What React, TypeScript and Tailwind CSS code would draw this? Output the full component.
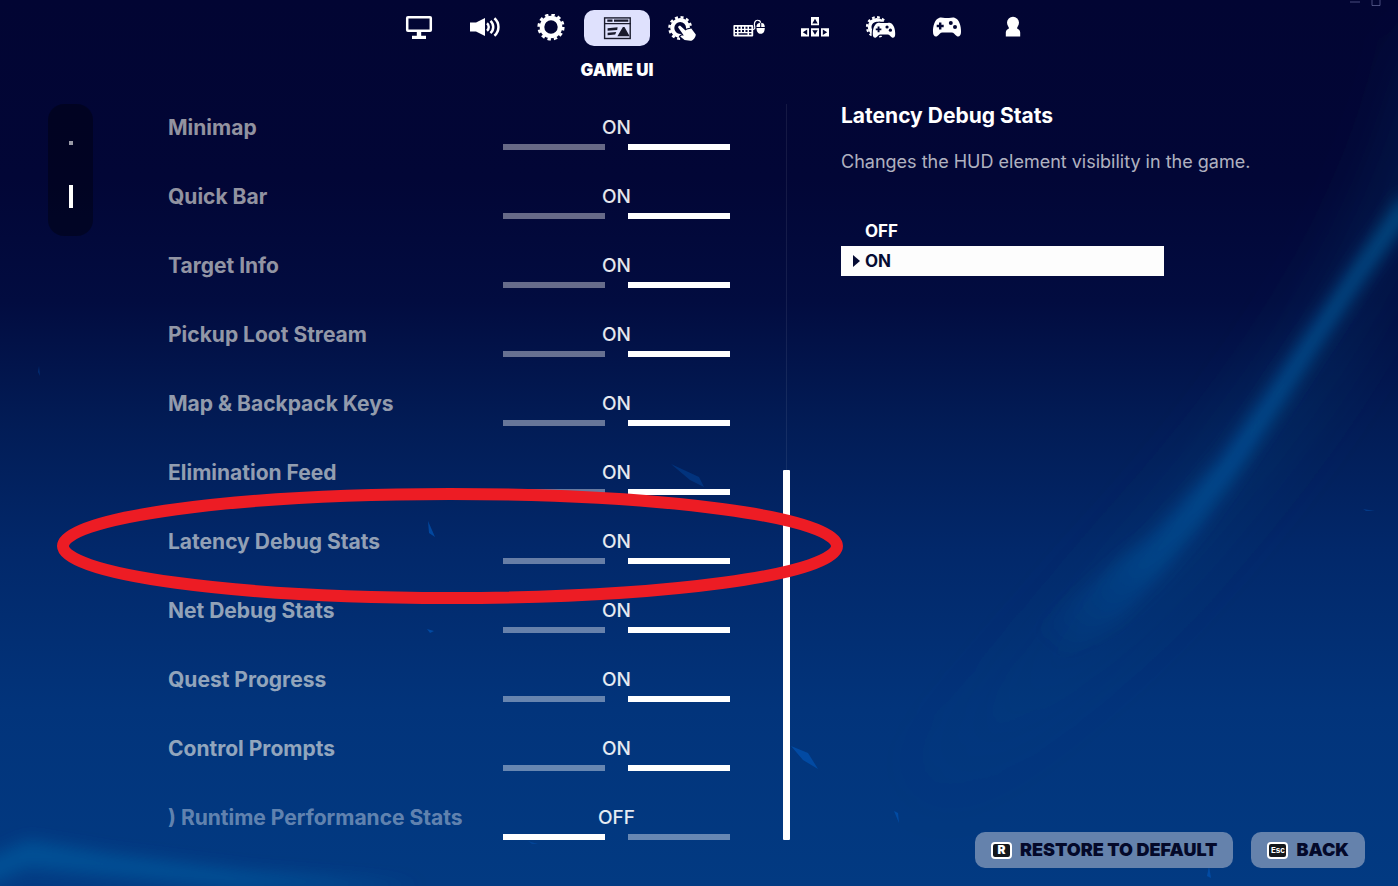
import { useState, type ReactNode } from "react";
import clsx from "clsx";

type Setting = { id: string; label: string; on: boolean; dim?: boolean };

const SETTINGS: Setting[] = [
  { id: "minimap", label: "Minimap", on: true },
  { id: "quick-bar", label: "Quick Bar", on: true },
  { id: "target-info", label: "Target Info", on: true },
  { id: "pickup-loot", label: "Pickup Loot Stream", on: true },
  { id: "map-keys", label: "Map & Backpack Keys", on: true },
  { id: "elimination-feed", label: "Elimination Feed", on: true },
  { id: "latency", label: "Latency Debug Stats", on: true },
  { id: "net-debug", label: "Net Debug Stats", on: true },
  { id: "quest-progress", label: "Quest Progress", on: true },
  { id: "control-prompts", label: "Control Prompts", on: true },
  { id: "runtime-stats", label: ") Runtime Performance Stats", on: false, dim: true },
];

const NAVY = "#020633";
const PAD =
  "M8 4C10 3 12 4 14 4H18C20 4 22 3 24 4C28 5 30.3 12 30 18C30 21.5 28 23.2 26 22.2C23.5 20.5 23 18.5 20.5 18.5H11.5C9 18.5 8.5 20.5 6 22.2C4 23.2 2 21.5 2 18C1.7 12 4 5 8 4Z";

function Icon({ children }: { children: ReactNode }) {
  return (
    <svg viewBox="0 0 32 28" className="h-7 w-8" fill="currentColor" aria-hidden="true">
      {children}
    </svg>
  );
}

function Gear({ cx, cy, scale = 1 }: { cx: number; cy: number; scale?: number }) {
  return (
    <g transform={`translate(${cx} ${cy}) scale(${scale})`} fill="none" stroke="currentColor">
      <circle r="9" strokeWidth="4.6" />
      <circle r="12.2" strokeWidth="2.8" strokeDasharray="3.4 2.988" />
    </g>
  );
}

function Gamepad({ outline }: { outline?: boolean }) {
  return (
    <>
      <path d={PAD} stroke={outline ? NAVY : "none"} strokeWidth="3" paintOrder="stroke" />
      <path d="M8 8.5h2.4v2.3h2.3v2.4h-2.3v2.3H8v-2.3H5.7v-2.4H8z" fill={NAVY} />
      <circle cx="19.8" cy="9" r="2" fill={NAVY} />
      <circle cx="24" cy="13" r="2" fill={NAVY} />
    </>
  );
}

const TABS = [
  {
    name: "VIDEO",
    icon: (
      <Icon>
        <rect x="4.2" y="3.2" width="23.6" height="13.6" rx="0.8" fill="none" stroke="currentColor" strokeWidth="2.5" />
        <path d="M13.8 17h4.4v4.7H23V25H9v-3.3h4.8z" />
      </Icon>
    ),
  },
  {
    name: "AUDIO",
    icon: (
      <Icon>
        <path d="M1 8.5h6L16 4v18l-9-4.5H1z" />
        <g fill="none" stroke="currentColor" strokeWidth="2.5">
          <path d="M18 9.3a4.8 4.8 0 0 1 0 7.4" />
          <path d="M21.5 6.800a8.400 8.400 0 0 1 0 12.400" />
          <path d="M25.400 4.200a11.600 11.600 0 0 1 0 17.600" />
        </g>
      </Icon>
    ),
  },
  { name: "GAME", icon: <Icon><Gear cx={16} cy={13} /></Icon> },
  {
    name: "GAME UI",
    icon: (
      <Icon>
        <rect x="3.6" y="3.9" width="25.6" height="20.6" fill="none" stroke="currentColor" strokeWidth="1.4" />
        <path d="M3 9h27v1.3H3zM6.3 5.6h5.2v2.2H6.3zM13 5.6h14.3v2.2H13z" />
        <path d="M6.6 14.2l10-.9-.4 2.6-9.6.9zM6.6 18.8l8.6-.8-1 2.6-7.6.6zM21.9 12.9h1.6l5.2 9.4H16.4z" />
      </Icon>
    ),
  },
  {
    name: "TOUCH AND MOTION",
    icon: (
      <Icon>
        <Gear cx={13.2} cy={14} scale={0.88} />
        <path
          d="M11.2 13.4C11 12 12.8 11.2 13.8 12.2L18.5 16.5L20 15.6L24.3 14.6L28.8 20.4C28.6 23.6 26.2 26.4 23.4 26.8L17.6 26L13.2 22.6C13.8 21.4 15.4 21.2 16.8 21.6Z"
          stroke={NAVY}
          strokeWidth="2.4"
          paintOrder="stroke"
        />
      </Icon>
    ),
  },
  {
    name: "MOUSE AND KEYBOARD",
    icon: (
      <Icon>
        <rect x="0.4" y="11" width="19.8" height="11.4" rx="1" />
        <path
          fill={NAVY}
          d="M2 12.7h2v2H2zM5.5 12.7h2v2h-2zM9 12.7h2v2H9zM12.5 12.7h2v2h-2zM16 12.7h2.4v2H16zM2 16h2v2H2zM5.5 16h2v2h-2zM9 16h2v2H9zM12.5 16h2v2h-2zM16 16h2.4v2H16zM2 19.2h2v1.6H2zM5.5 19.2h9v1.6h-9zM16 19.2h2.4v1.6H16z"
        />
        <path d="M20 15.5c3-.2 1.4-3 1.4-5.2 0-3.4 2-4.2 3.8-4 1.4.1 2.2.7 2.3 2.4" fill="none" stroke="currentColor" strokeWidth="1.2" />
        <path d="M27.2 8.7c-2.6.2-3.7 1.8-3.7 4.3h3.7zM28.2 8.7c2.4.2 3.6 1.8 3.6 4.3h-3.6zM23.5 13.9h8.3c0 3.7-1.6 5.9-4.1 5.9s-4.2-2.2-4.2-5.9z" />
      </Icon>
    ),
  },
  {
    name: "KEYBOARD CONTROLS",
    icon: (
      <Icon>
        <path d="M12 3h8v8.2h-8zM2 14.2h8v8.2H2zM12 14.2h8v8.2h-8zM22 14.2h8v8.2h-8z" />
        <path fill={NAVY} d="M16 4.8l2.7 4.6h-5.4zM3.8 18.3l4.4-2.7v5.4zM16 20.8l-2.7-4.6h5.4zM28.2 18.3l-4.4-2.7v5.4z" />
      </Icon>
    ),
  },
  {
    name: "CONTROLLER OPTIONS",
    icon: (
      <Icon>
        <Gear cx={11.8} cy={13} scale={0.8} />
        <g transform="translate(6.2 5.8) scale(0.8)">
          <Gamepad outline />
        </g>
      </Icon>
    ),
  },
  { name: "CONTROLLER", icon: <Icon><Gamepad /></Icon> },
  {
    name: "ACCOUNT",
    icon: (
      <Icon>
        <circle cx="16" cy="8.8" r="6" />
        <path d="M11.5 12h9l-.4 2.4c1.8.8 3.1 2 3.1 4v4.2H8.8v-4.2c0-2 1.3-3.2 3.1-4z" />
      </Icon>
    ),
  },
];

function Backdrop() {
  return (
    <svg
      viewBox="0 0 1398 886"
      preserveAspectRatio="none"
      className="pointer-events-none absolute inset-0 h-full w-full"
      aria-hidden="true"
    >
      <defs>
        <linearGradient id="beam" gradientUnits="userSpaceOnUse" x1="1398" y1="200" x2="1030" y2="670">
          <stop offset="0" stopColor="#04508a" stopOpacity="0.9" />
          <stop offset="0.5" stopColor="#02529a" stopOpacity="0.75" />
          <stop offset="0.75" stopColor="#02529a" stopOpacity="0.5" />
          <stop offset="0.95" stopColor="#02529a" stopOpacity="0" />
        </linearGradient>
        <linearGradient id="glow" gradientUnits="userSpaceOnUse" x1="1398" y1="200" x2="900" y2="800">
          <stop offset="0" stopColor="#045488" stopOpacity="0.2" />
          <stop offset="0.6" stopColor="#045488" stopOpacity="0.2" />
          <stop offset="1" stopColor="#045488" stopOpacity="0" />
        </linearGradient>
        <filter id="soft" x="-30%" y="-30%" width="160%" height="160%">
          <feGaussianBlur stdDeviation="8" />
        </filter>
        <filter id="wide" x="-50%" y="-50%" width="200%" height="200%">
          <feGaussianBlur stdDeviation="30" />
        </filter>
      </defs>
      <path d="M1450 40C1400 280 1240 480 1060 660S840 830 760 880" fill="none" stroke="url(#glow)" strokeWidth="70" filter="url(#wide)" />
      <path
        d="M1405 191L1357 260L1300 343L1259 404L1222 457L1186 498L1151 536L1120 560L1020 645L1034 680L1118 619L1165 569L1200 526L1238 472L1276 414L1316 352L1364 280L1410 216Z"
        fill="url(#beam)"
        filter="url(#soft)"
      />
      <path d="M-20 862L28 840L110 854L250 872L420 886L240 888L28 868L-20 888Z" fill="#0262a6" fillOpacity="0.55" filter="url(#soft)" />
      <g fill="#0350ac" fillOpacity="0.8">
        <path d="M791 746L808 753L818 769L803 760Z" />
        <path d="M894 811L898 813L899 823Z" />
        <path d="M428 521L435 537L429 533Z" />
        <path d="M427 629L434 631L430 633Z" />
        <path d="M671 464L699 477L704 487L690 480Z" fillOpacity="0.4" />
        <path d="M1209 866L1211 878L1207 876Z" />
        <path d="M1363 509L1375 511L1366 511Z" fillOpacity="0.5" />
        <path d="M528 841L538 844L532 844Z" fillOpacity="0.5" />
        <path d="M39 366L40 376L38 372Z" fillOpacity="0.4" />
      </g>
    </svg>
  );
}

function SettingRow({ setting, onToggle }: { setting: Setting; onToggle: () => void }) {
  const { id, label, on, dim } = setting;
  return (
    <li className="relative flex h-[69px] items-start pt-2.5">
      <span
        id={id}
        className={clsx("flex-1 text-[21px] leading-7 font-bold", dim ? "text-white/40" : "text-[#f6f4ea]/60")}
      >
        {label}
      </span>
      <button type="button" role="switch" aria-checked={on} aria-labelledby={id} onClick={onToggle} className="w-[227px]">
        <span className="block text-[19px] leading-7 font-medium text-white/90">{on ? "ON" : "OFF"}</span>
        <span className="mt-0.5 flex justify-between">
          <span className={clsx("h-1.5 w-[102px]", on ? "bg-white/40" : "bg-white")} />
          <span className={clsx("h-1.5 w-[102px]", on ? "bg-white" : "bg-white/40")} />
        </span>
      </button>
      {id === "latency" && (
        <svg
          viewBox="0 0 788 118"
          preserveAspectRatio="none"
          className="pointer-events-none absolute -top-[31px] -left-28 z-10 h-[118px] w-[calc(100%+226px)]"
          aria-hidden="true"
        >
          <ellipse cx="394" cy="59" rx="387" ry="52" fill="none" stroke="#ed1c24" strokeWidth="12" />
        </svg>
      )}
    </li>
  );
}

function KeyButton({ hint, children }: { hint: string; children: ReactNode }) {
  return (
    <button
      type="button"
      className="flex h-9 items-center gap-2 rounded-[10px] bg-[#6582ac] px-4 text-lg leading-6 font-black whitespace-nowrap text-[#04092a]"
    >
      <kbd
        className={clsx(
          "flex h-[17px] w-[21px] items-center justify-center rounded border-2 border-white bg-[#15181c] font-[Inter,sans-serif] text-white",
          hint.length > 1 ? "text-[8px] font-bold" : "text-xs font-black"
        )}
      >
        {hint}
      </kbd>
      {children}
    </button>
  );
}

export default function App() {
  const [settings, setSettings] = useState(SETTINGS);
  const [tab, setTab] = useState("GAME UI");
  const latencyOn = settings.some((s) => s.id === "latency" && s.on);

  const update = (id: string, on: boolean) =>
    setSettings((list) => list.map((s) => (s.id === id ? { ...s, on } : s)));

  return (
    <div className="relative flex min-h-screen flex-col overflow-hidden bg-linear-[to_bottom,#020533_0%,#020636_20%,#020c40_34%,#021c56_48%,#02286a_62%,#02347b_80%,#023a82_100%] font-[Inter,sans-serif] text-white">
      <Backdrop />
      <svg viewBox="0 0 31 7" className="absolute top-0 right-[17px] h-[7px] w-[31px]" aria-hidden="true">
        <path d="M0 2H10M22 0V5.5H30V0" fill="none" stroke="#8f96c8" strokeOpacity="0.5" />
      </svg>

      {/* Category tabs */}
      <header className="relative flex h-[104px] justify-center pt-2.5 pl-[34px]">
        {TABS.map(({ name, icon }) => (
          <div key={name} className="flex w-[66px] flex-col items-center">
            <button
              type="button"
              aria-label={name}
              onClick={() => setTab(name)}
              className={clsx(
                "flex h-9 w-full items-center justify-center rounded-[10px]",
                tab === name ? "bg-[#dfe1fd] text-[#1a1b2c]" : "text-white"
              )}
            >
              {icon}
            </button>
            {tab === name && <h1 className="mt-3 text-[17px] leading-6 font-black whitespace-nowrap">{name}</h1>}
          </div>
        ))}
      </header>

      <main className="relative flex flex-1 pr-[33px] pb-[18px] pl-12">
        <nav className="flex w-[45px] flex-col items-center gap-10 self-start rounded-2xl bg-black/35 pt-[37px] pb-7">
          <a href="#general" aria-label="General" className="size-1 bg-white/60" />
          <a href="#hud" aria-label="HUD" className="h-[23px] w-1 bg-white" />
        </nav>

        <ul className="ml-[75px] flex-[562]">
          {settings.map((s) => (
            <SettingRow key={s.id} setting={s} onToggle={() => update(s.id, !s.on)} />
          ))}
        </ul>

        {/* Scroll position */}
        <div className="mb-7 ml-[53px] flex w-[7px] flex-col items-center">
          <div className="w-px flex-[366] bg-white/8" />
          <div className="w-full flex-[370] rounded-[1px] bg-white" />
        </div>

        {/* Details for the highlighted setting */}
        <section className="ml-[51px] flex flex-[524] flex-col">
          <h2 className="text-[21px] leading-6 font-bold">Latency Debug Stats</h2>
          <p className="mt-[21px] text-lg leading-[26px] text-white/70">Changes the HUD element visibility in the game.</p>
          <div className="mt-[41px] flex w-[323px] flex-col">
            {[false, true].map((value) => (
              <button
                key={String(value)}
                type="button"
                aria-pressed={latencyOn === value}
                onClick={() => update("latency", value)}
                className={clsx(
                  "flex h-[30px] items-center pl-3 text-left text-[17px] leading-7 font-bold",
                  latencyOn === value ? "bg-[#fdfdfd] text-[#050b33]" : "text-white"
                )}
              >
                <svg viewBox="0 0 12 12" className="size-3" fill="currentColor" aria-hidden="true">
                  {latencyOn === value && <path d="M0 0L7 6L0 12Z" />}
                </svg>
                {value ? "ON" : "OFF"}
              </button>
            ))}
          </div>

          <footer className="mt-auto flex justify-end gap-[18px]">
            <KeyButton hint="R">RESTORE TO DEFAULT</KeyButton>
            <KeyButton hint="Esc">BACK</KeyButton>
          </footer>
        </section>
      </main>
    </div>
  );
}
